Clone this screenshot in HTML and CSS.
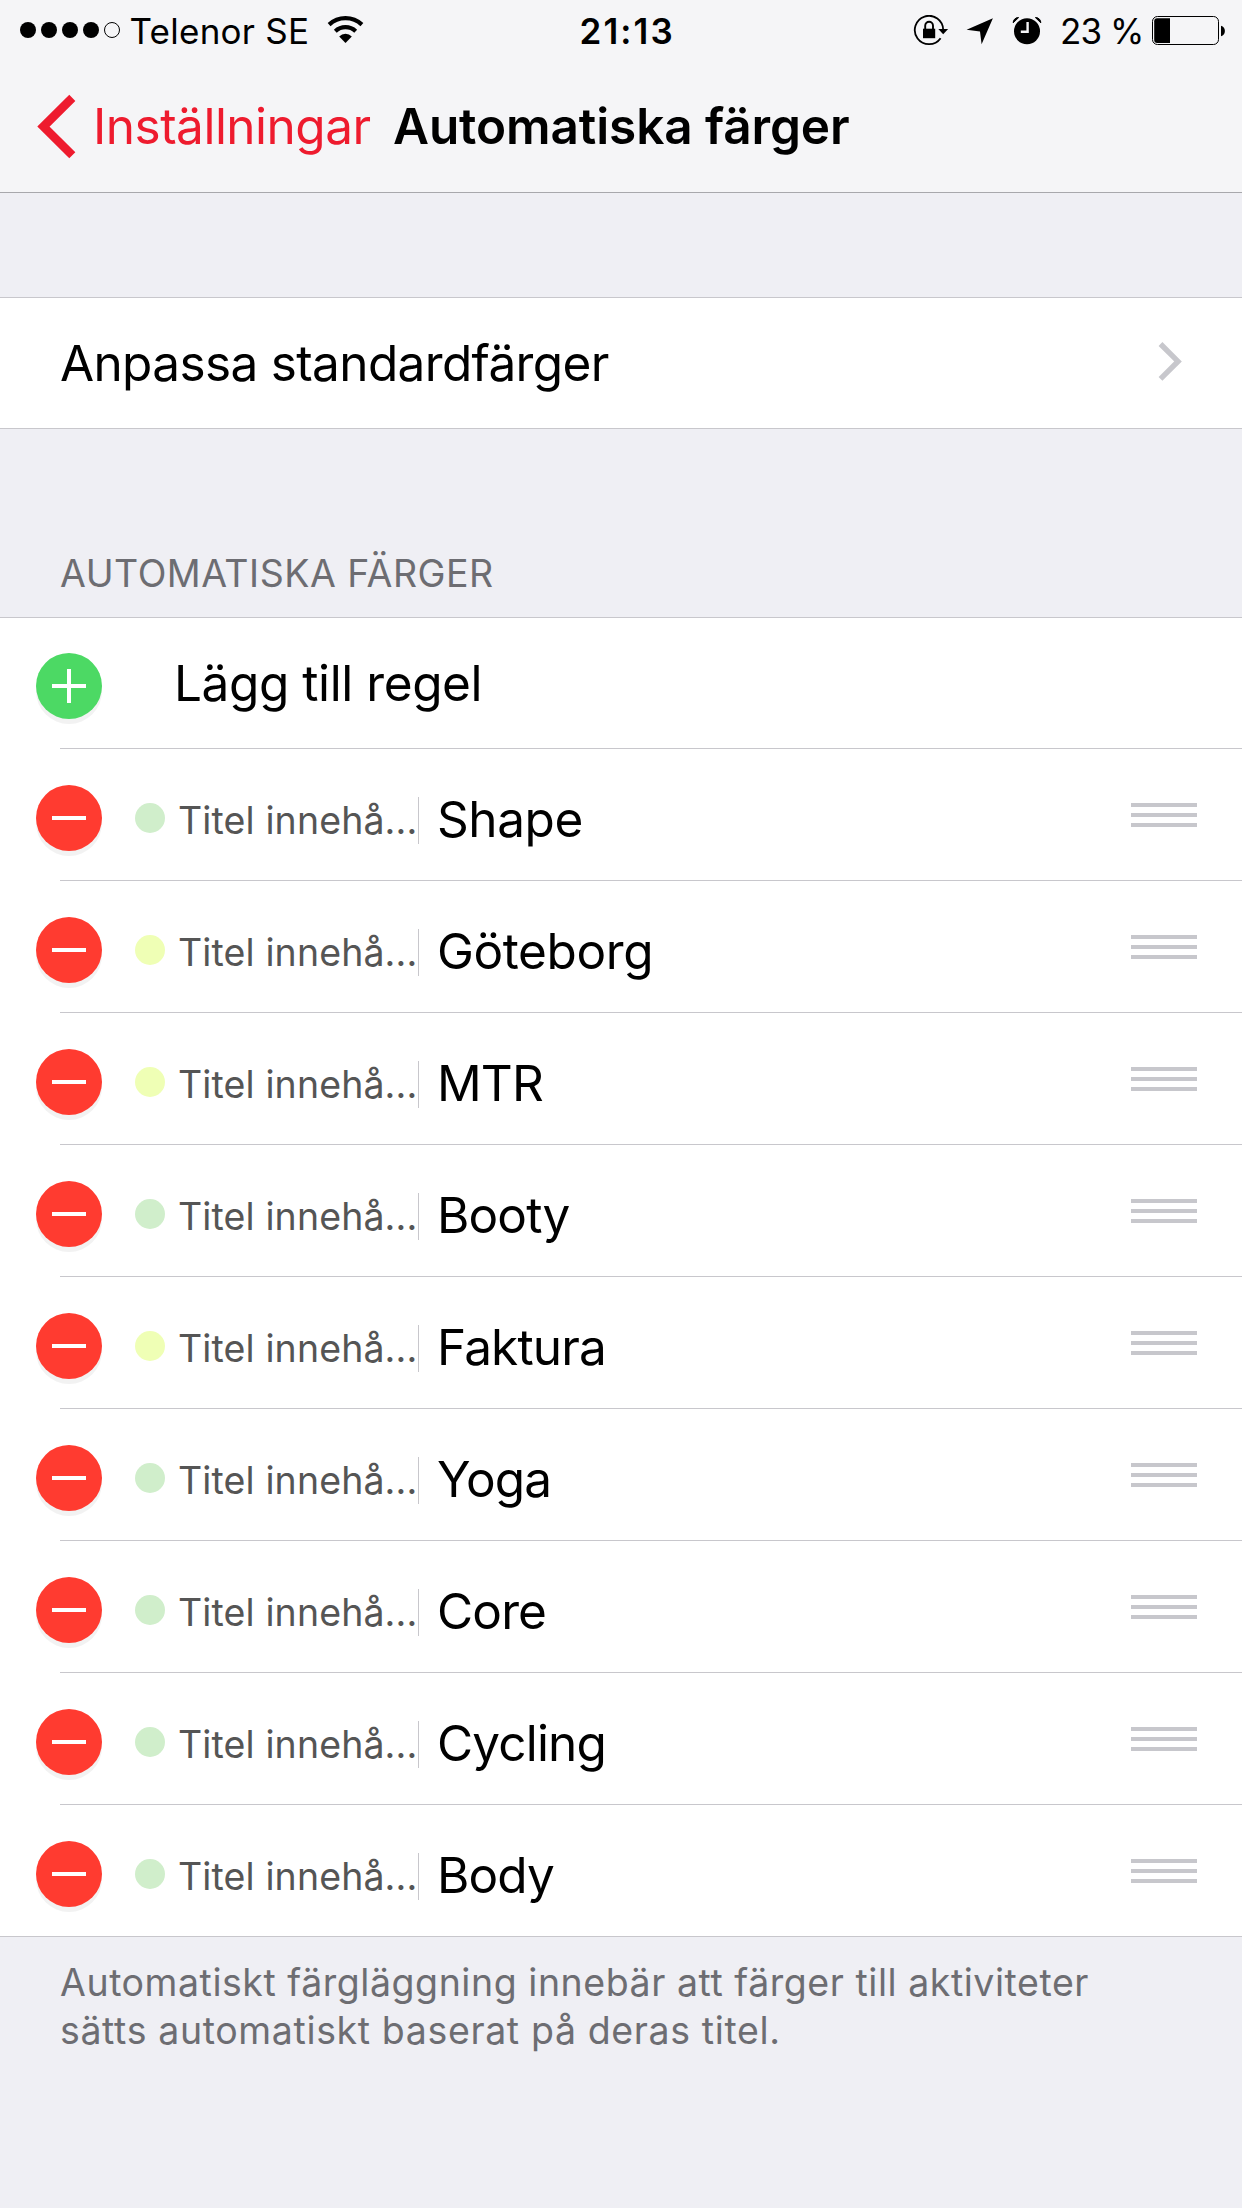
FILE: index.html
```html
<!DOCTYPE html>
<html lang="sv">
<head>
<meta charset="utf-8">
<title>Automatiska färger</title>
<link rel="stylesheet" href="styles.css">
</head>
<body>
<svg width="0" height="0" class="defs">
  <symbol id="plus" viewBox="0 0 66 66"><circle cx="33" cy="33" r="33" fill="#4cd964"/><path d="M16 33h34M33 16v34" stroke="#fff" stroke-width="4"/></symbol>
  <symbol id="minus" viewBox="0 0 66 66"><circle cx="33" cy="33" r="33" fill="#ff3b30"/><path d="M16 33h34" stroke="#fff" stroke-width="4"/></symbol>
</svg>
<header class="top">
  <div class="status">
    <div class="status-left">
      <svg width="101" height="32" viewBox="20 15 101 32"><circle cx="28" cy="30" r="8"/><circle cx="49" cy="30" r="8"/><circle cx="70" cy="30" r="8"/><circle cx="91" cy="30" r="8"/><circle cx="112" cy="30" r="7.5" fill="none" stroke="#000"/></svg>
      <span class="carrier">Telenor SE</span>
      <svg width="39" height="32" viewBox="326 15 39 32"><g fill="none" stroke="#000" stroke-width="4.2"><path d="M329.1 24.6a24 24 0 0 1 32.8 0"/><path d="M335.3 31.2a15 15 0 0 1 20.4 0"/></g><path d="M345.5 43l-6.3-6.6a9 9 0 0 1 12.6 0z"/></svg>
    </div>
    <span class="time">21:13</span>
    <div class="status-right">
      <svg width="37" height="32" viewBox="913 15 37 32"><path d="M943.2 30A14.2 14.2 0 1 0 940.6 38.2" fill="none" stroke="#000" stroke-width="1.8"/><path d="M938.3 29h9.8l-4.9 5.2z"/><path d="M923 28.7h12.2v9.5H923z"/><path d="M925.2 29v-3.3a3.9 3.9 0 0 1 7.8 0V29" fill="none" stroke="#000" stroke-width="1.9"/></svg>
      <svg class="locate" width="28" height="32" viewBox="966 15 28 32"><path d="M992.9 18.2L981.6 44.2l-1.6-12.8-13.4-1.7z"/></svg>
      <svg class="alarm" width="30" height="32" viewBox="1012 15 30 32"><circle cx="1027" cy="31.3" r="13"/><path d="M1027.6 22v9.8h-6.8" fill="none" stroke="#f5f5f7" stroke-width="2.4"/><path d="M1013.2 22.8a5 5 0 0 1 5.4-5.2zM1040.8 22.8a5 5 0 0 0-5.4-5.2z" stroke="#000" stroke-width="1"/></svg>
      <span class="percent">23 %</span>
      <svg width="74" height="32" viewBox="1152 15 74 32"><rect x="1152.5" y="16.5" width="66" height="28" rx="5" fill="none" stroke="#000"/><path d="M1170 18.2V43h-12.800a3 3 0 0 1-3-3V21.200a3 3 0 0 1 3-3z"/><path d="M1221 25.800c5.200 1 5.200 9.400 0 10.400z"/></svg>
    </div>
  </div>
  <nav class="nav">
    <a class="back"><svg width="41" height="66" viewBox="36 93 41 66"><path d="M72.300 97.900L43.400 126.600l28.900 28.700" fill="none" stroke="#ee1b2e" stroke-width="8.600"/></svg><span>Inställningar</span></a>
    <h1 class="title">Automatiska färger</h1>
  </nav>
</header>
<main>
  <section class="group">
    <div class="cell"><span class="cell-label">Anpassa standardfärger</span><svg class="chevron" width="25" height="41" viewBox="1158 341 25 41"><path d="M1160.500 344L1178 361.400l-17.500 17.400" fill="none" stroke="#c7c7cc" stroke-width="5.400"/></svg></div>
  </section>
  <h2 class="heading">AUTOMATISKA FÄRGER</h2>
  <ul class="list">
    <li class="row add"><svg class="round"><use href="#plus"/></svg><span class="add-label">Lägg till regel</span></li>
    <li class="row"><svg class="round"><use href="#minus"/></svg><i class="dot green"></i><span class="kind">Titel innehå...</span><span class="name">Shape</span><i class="grip"></i></li>
    <li class="row"><svg class="round"><use href="#minus"/></svg><i class="dot yellow"></i><span class="kind">Titel innehå...</span><span class="name">Göteborg</span><i class="grip"></i></li>
    <li class="row"><svg class="round"><use href="#minus"/></svg><i class="dot yellow"></i><span class="kind">Titel innehå...</span><span class="name tight">MTR</span><i class="grip"></i></li>
    <li class="row"><svg class="round"><use href="#minus"/></svg><i class="dot green"></i><span class="kind">Titel innehå...</span><span class="name tight">Booty</span><i class="grip"></i></li>
    <li class="row"><svg class="round"><use href="#minus"/></svg><i class="dot yellow"></i><span class="kind">Titel innehå...</span><span class="name tight">Faktura</span><i class="grip"></i></li>
    <li class="row"><svg class="round"><use href="#minus"/></svg><i class="dot green"></i><span class="kind">Titel innehå...</span><span class="name tight">Yoga</span><i class="grip"></i></li>
    <li class="row"><svg class="round"><use href="#minus"/></svg><i class="dot green"></i><span class="kind">Titel innehå...</span><span class="name tight">Core</span><i class="grip"></i></li>
    <li class="row"><svg class="round"><use href="#minus"/></svg><i class="dot green"></i><span class="kind">Titel innehå...</span><span class="name tight">Cycling</span><i class="grip"></i></li>
    <li class="row"><svg class="round"><use href="#minus"/></svg><i class="dot green"></i><span class="kind">Titel innehå...</span><span class="name tight">Body</span><i class="grip"></i></li>
  </ul>
  <p class="note">Automatiskt färgläggning innebär att färger till aktiviteter<br><span class="note-end">sätts automatiskt baserat på deras titel.</span></p>
</main>
</body>
</html>
```
FILE: styles.css
```css
* { box-sizing: border-box; }
body {
  margin: 0;
  min-height: 2208px;
  background: #efeff4;
  color: #000;
  font-family: Inter, "Liberation Sans", sans-serif;
  font-size: 49.5px;
  line-height: 60px;
  white-space: nowrap;
}
svg { flex: none; display: block; }
.defs { position: absolute; }

.top { background: #f5f5f7; border-bottom: 1px solid #a8a8ac; }
.status {
  display: flex;
  align-items: center;
  height: 60px;
  padding: 2px 16px 0 20px;
  font-size: 35px;
  line-height: 42px;
}
.status-left { display: flex; align-items: center; width: 559.5px; }
.carrier { width: 196.5px; margin-left: 8.5px; letter-spacing: .25px; }
.time { font-weight: 570; letter-spacing: 2.1px; }
.status-right { display: flex; align-items: center; margin-left: auto; }
.locate { margin-left: 16px; }
.alarm { margin-left: 18px; }
.percent { width: 92px; margin-left: 18px; letter-spacing: -.94px; }

.nav { display: flex; align-items: center; height: 132px; padding-left: 36px; }
.back { display: flex; align-items: center; gap: 16px; width: 357px; color: #ee1b2e; letter-spacing: -.5px; }
.title { margin: 0; font-size: inherit; font-weight: 600; letter-spacing: -.1px; }

.group { margin-top: 104px; background: #fff; border: solid #c8c7cc; border-width: 1px 0; }
.cell { display: flex; align-items: center; justify-content: space-between; height: 130px; padding: 0 59px 0 60px; }
.cell-label { letter-spacing: -.64px; }
.chevron { margin-bottom: 3px; }

.heading {
  margin: 0;
  padding: 121px 0 19px 60px;
  color: #6d6d72;
  font-size: 37.5px;
  font-weight: 400;
  line-height: 48px;
  letter-spacing: .5px;
}

.list { margin: 0; padding: 0; list-style: none; background: #fff; border-top: 1px solid #c8c7cc; }
.row {
  display: flex;
  align-items: center;
  height: 132px;
  margin-left: 60px;
  padding: 7px 45px 0 0;
  border-bottom: 1px solid #c8c7cc;
}
.row:last-child { margin-left: 0; padding-left: 60px; }
.round { width: 66px; height: 66px; margin-left: -24px; filter: drop-shadow(0 5px 0 #f2f2f2); }
.add { height: 131px; padding-top: 0; }
.add .round { margin-top: 6px; }
.add-label { margin-left: 72px; letter-spacing: -.42px; }
.dot { width: 30px; height: 30px; margin-left: 33px; border-radius: 50%; }
.green { background: #d0eecb; }
.yellow { background: #efffb5; }
.kind {
  width: 241px;
  height: 47px;
  margin: 5px 0 0 13px;
  border-right: 1px solid #c8c7cc;
  color: #555;
  font-size: 37.5px;
  line-height: 47px;
  letter-spacing: .12px;
}
.name { margin: 2px 0 0 18px; letter-spacing: -.4px; }
.tight { letter-spacing: -.85px; }
.grip {
  width: 66px;
  height: 24px;
  margin: 0 0 6px auto;
  background: repeating-linear-gradient(#c7c7cc 0 4px, transparent 4px 10px);
}

.note { margin: 0; padding: 22px 0 0 60px; color: #6d6d72; font-size: 37.5px; line-height: 48px; letter-spacing: .54px; }
.note-end { letter-spacing: .63px; }
```
